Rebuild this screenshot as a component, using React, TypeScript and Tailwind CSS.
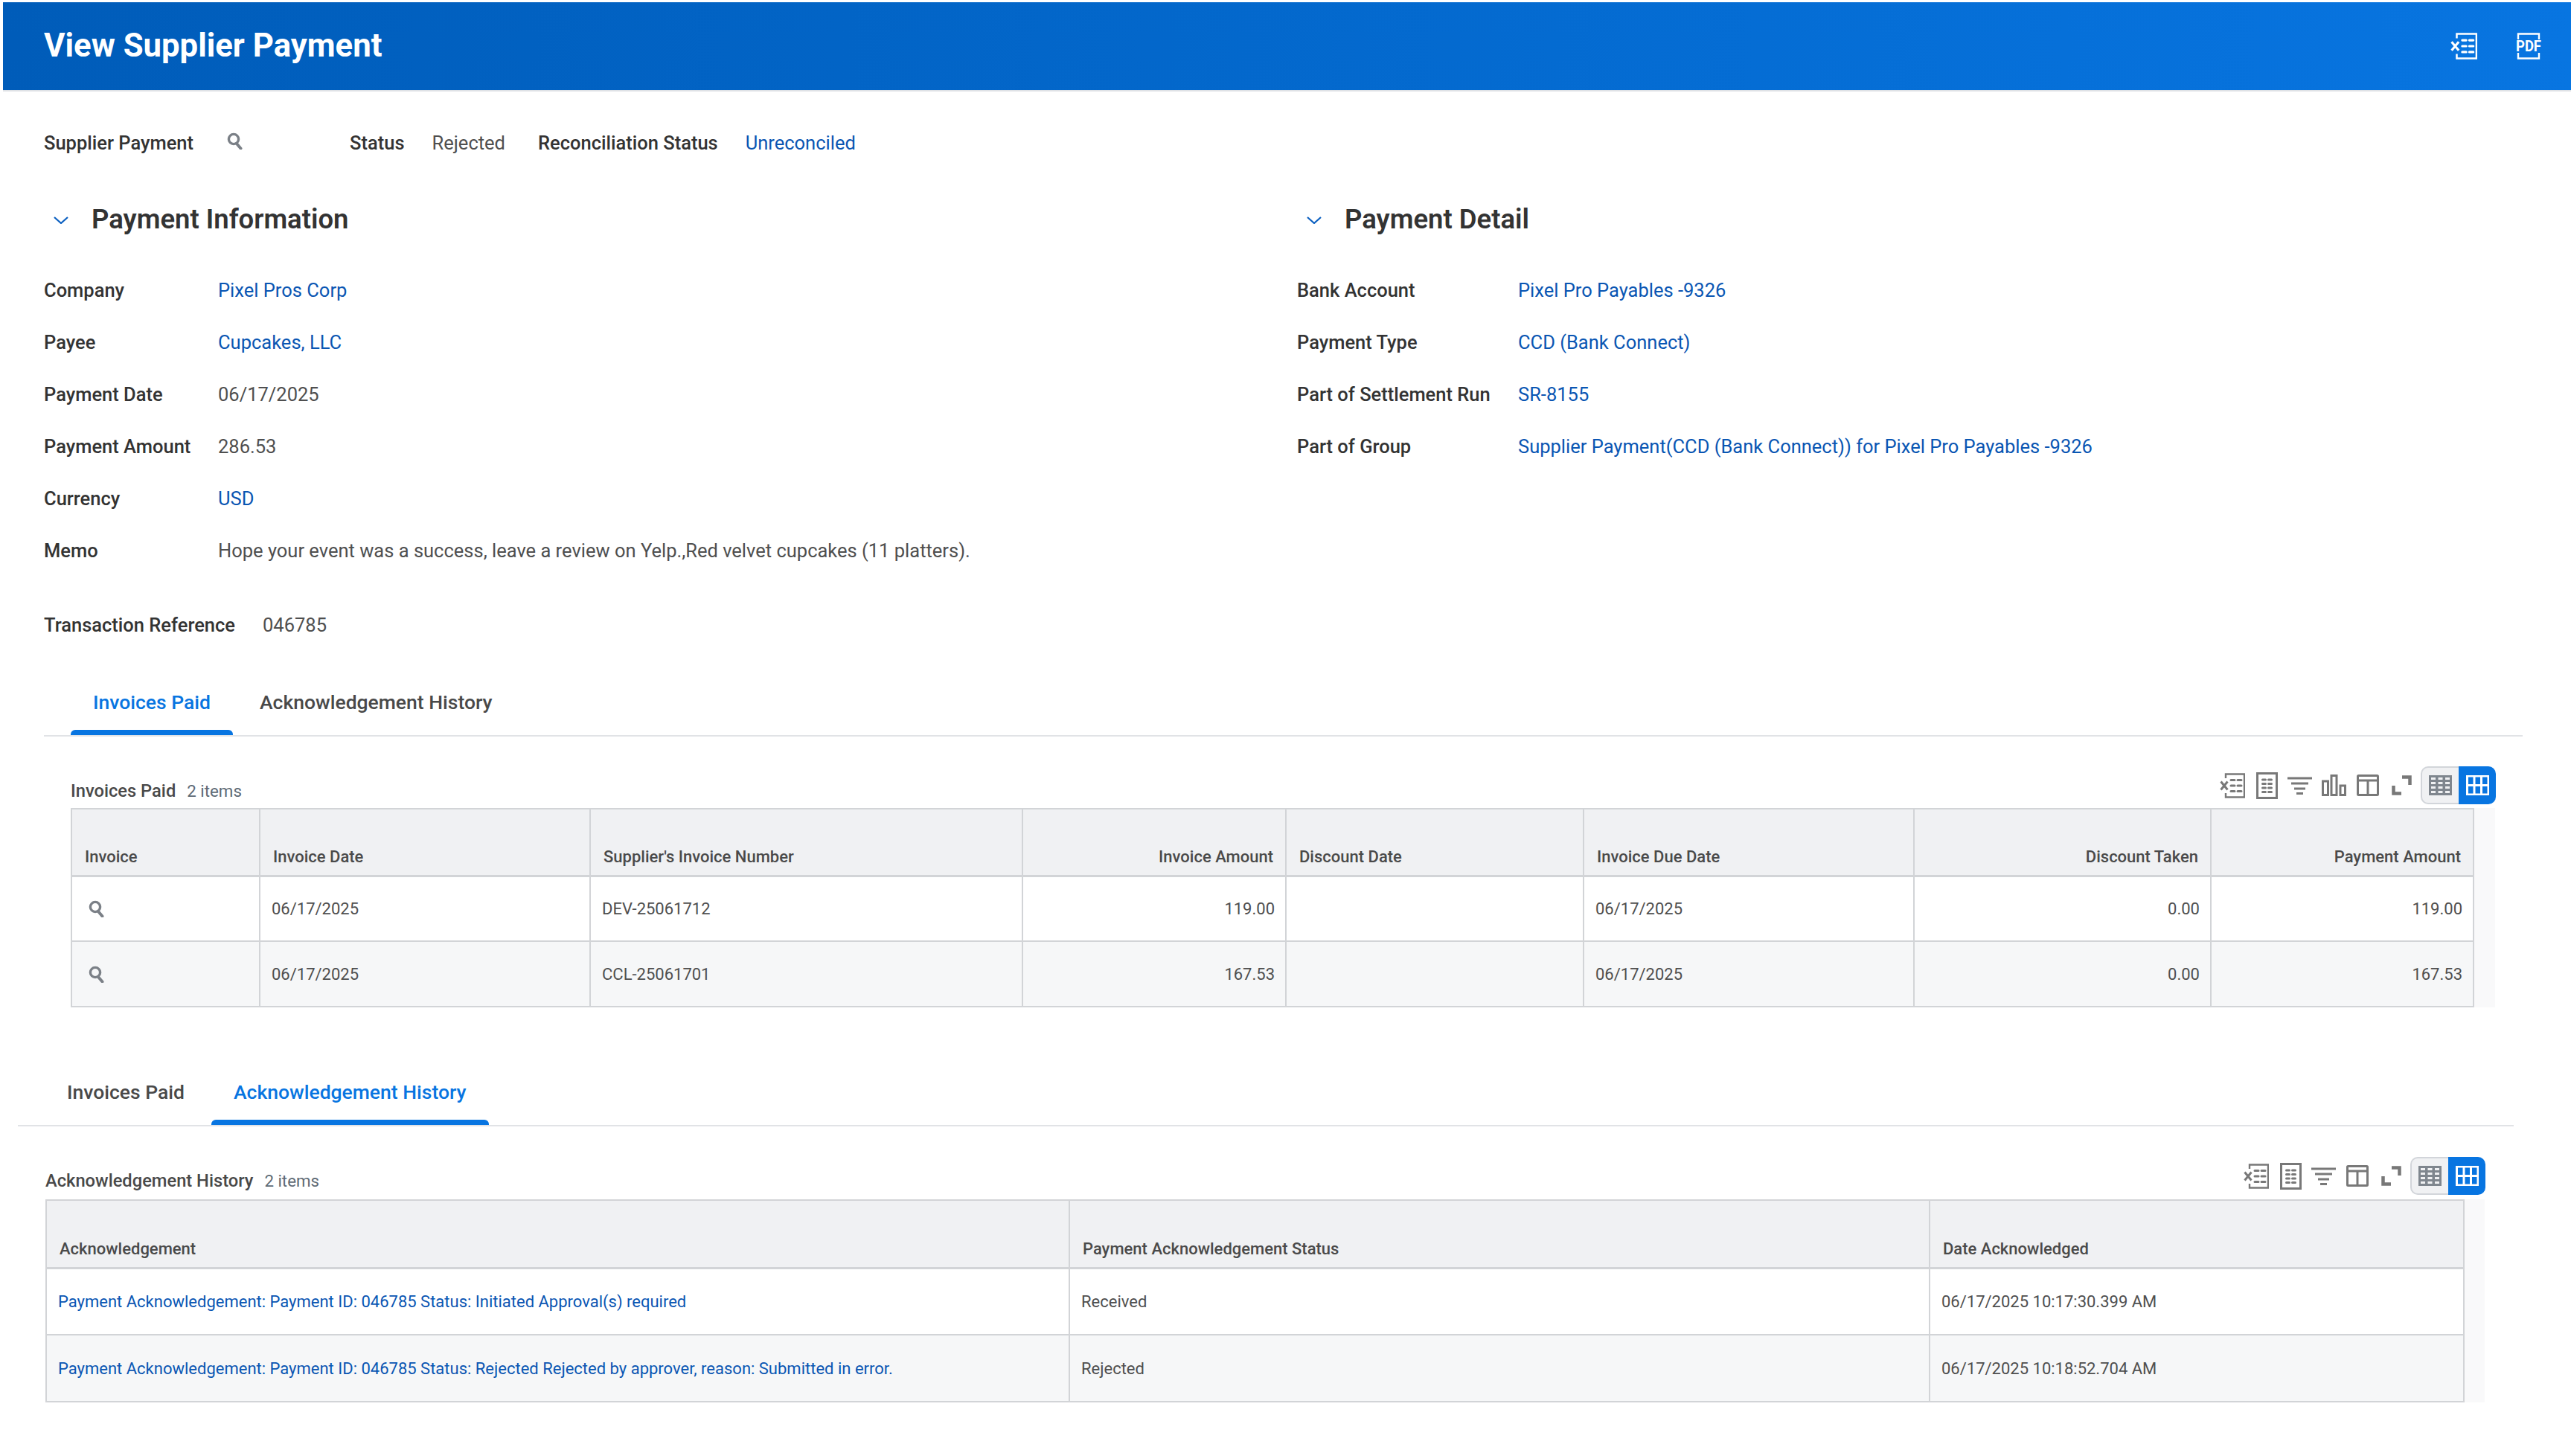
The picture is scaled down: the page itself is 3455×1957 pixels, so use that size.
import { ReactNode } from "react";

const Search = ({ className }: { className: string }) => (
	<svg viewBox="0 0 22 23" className={className} fill="none" stroke="#7b8087">
		<circle cx="9" cy="9" r="6.6" strokeWidth="3.4" />
		<path d="M13 15l5.5 6.5" strokeWidth="4" strokeLinecap="round" />
	</svg>
);

const Chevron = () => (
	<svg viewBox="0 0 20 10" className="h-[10px] w-[20px]" fill="none" stroke="#0a5fc0" strokeWidth="2.2">
		<path d="M1 1l9 8 9-8" />
	</svg>
);

const ExcelIcon = ({ color, className }: { color: string; className: string }) => (
	<svg viewBox="0 0 34 34" className={className} fill="none" stroke={color}>
		<path d="M8 7V1.500h25v31H8V27" strokeWidth="2.4" />
		<path d="M1.500 11.500l9 11M10.500 11.500l-9 11" strokeWidth="3" />
		<path d="M15 9.500h5M24 9.500h5M15 17h5M24 17h5M15 24.500h5M24 24.500h5" strokeWidth="3" strokeLinecap="round" />
	</svg>
);

const ListIcon = () => (
	<svg viewBox="0 0 29 36" className="h-[36px] w-[29px]" fill="none" stroke="#787878">
		<rect x="1.500" y="1.500" width="26" height="33" strokeWidth="3" />
		<path d="M8.500 10h4M16.500 10h4M8.500 15.500h4M16.500 15.500h4M8.500 21h4M16.500 21h4M8.500 26.500h4M16.500 26.500h4" strokeWidth="3" strokeLinecap="round" />
	</svg>
);

const FilterIcon = () => (
	<svg viewBox="0 0 33 24" className="h-[24px] w-[33px]" fill="none" stroke="#787878" strokeWidth="3">
		<path d="M0 2h33M5 9h23M9 16h15M12 22.500h9" />
	</svg>
);

const ChartIcon = () => (
	<svg viewBox="0 0 33 29" className="h-[29px] w-[33px]" fill="none" stroke="#787878" strokeWidth="3">
		<path d="M1.500 9h7v18.500h-7zM13 1.500h7v26h-7zM25 15h6.500v12.500H25z" />
	</svg>
);

const ColumnsIcon = () => (
	<svg viewBox="0 0 30 29" className="h-[29px] w-[30px]" fill="none" stroke="#787878" strokeWidth="3">
		<rect x="1.500" y="1.500" width="27" height="26" rx="1" />
		<path d="M1.500 8h27M15 8v19.500" />
	</svg>
);

const ExpandIcon = () => (
	<svg viewBox="0 0 27 27" className="h-[27px] w-[27px]" fill="none" stroke="#787878" strokeWidth="4.500">
		<path d="M14 2.500h10.500V13M2.500 14v10.500H13" />
	</svg>
);

const ViewToggle = () => (
	<div className="flex h-[51px] w-[101px]">
		<div className="flex w-[51px] items-center justify-center rounded-l-[10px] border-2 border-r-0 border-[#d2d5da] bg-[#f0f1f3]">
			<svg viewBox="0 0 31 27" className="h-[27px] w-[31px]">
				<rect width="31" height="27" fill="#7f868e" />
				<path
					d="M3 3h6v3H3zM12.500 3h6v3h-6zM22 3h6v3h-6zM3 9h6v3H3zM12.500 9h6v3h-6zM22 9h6v3h-6zM3 15h6v3H3zM12.500 15h6v3h-6zM22 15h6v3h-6zM3 21h6v3H3zM12.500 21h6v3h-6zM22 21h6v3h-6z"
					fill="#f0f1f3"
				/>
			</svg>
		</div>
		<div className="flex w-[50px] items-center justify-center rounded-r-[10px] bg-[#0875e1]">
			<svg viewBox="0 0 31 27" className="h-[27px] w-[31px]">
				<rect width="31" height="27" fill="#fff" />
				<path d="M3 2.500h6.500v9.500H3zM12.500 2.500h6.500v9.500h-6.500zM22 2.500h6.500v9.500H22zM3 15h6.500v9.500H3zM12.500 15h6.500v9.500h-6.500zM22 15h6.500v9.500H22z" fill="#0875e1" />
			</svg>
		</div>
	</div>
);

const Field = ({ label, labelClass, link, children }: { label: string; labelClass: string; link?: boolean; children: ReactNode }) => (
	<div className="flex h-[70px] items-center pt-[1px] text-[25.500px]">
		<span className={`${labelClass} font-medium text-[#333333]`}>{label}</span>
		<span className={link ? "text-[#0a56b3]" : "text-[#4f4f4f]"}>{children}</span>
	</div>
);

const SectionHeading = ({ title }: { title: string }) => (
	<div className="flex h-[60px] items-center">
		<span className="ml-[13px] mr-[31px] mt-[2px] flex">
			<Chevron />
		</span>
		<h2 className="pt-[1px] text-[36.500px] font-semibold text-[#333333]">{title}</h2>
	</div>
);

const Tabs = ({ active }: { active: number }) => (
	<div className="flex h-[90px] gap-[6px] border-b-2 border-[#e1e3e6] pl-[36px]">
		{["Invoices Paid", "Acknowledgement History"].map((tab, i) => (
			<div
				key={tab}
				className={`relative flex h-[88px] items-center px-[30px] text-[26.500px] font-medium ${
					i === active ? "text-[#0875e1]" : "text-[#494949]"
				}`}
			>
				{tab}
				{i === active && <span className="absolute bottom-0 left-0 right-0 h-[7px] rounded-t-[6px] bg-[#0875e1]"></span>}
			</div>
		))}
	</div>
);

const thClass = "border-2 border-b-[3px] border-[#d2d4d7] bg-[#f0f1f3] pl-[17px] pr-[16px] pb-[11px] align-bottom text-[22px] font-medium leading-[26px] text-[#4a4a4a]";
const tdClass = "border-2 border-[#d2d4d7] pl-[15px] pr-[14px] text-[22px] text-[#4f4f4f]";

const invoiceRows = [
	["06/17/2025", "DEV-25061712", "119.00", "", "06/17/2025", "0.00", "119.00"],
	["06/17/2025", "CCL-25061701", "167.53", "", "06/17/2025", "0.00", "167.53"],
];

const InvoicesTable = () => (
	<table className="w-[3230px] table-fixed border-collapse">
		<thead>
			<tr className="h-[90px]">
				<th className={`${thClass} w-[253px] text-left`}>Invoice</th>
				<th className={`${thClass} w-[444px] text-left`}>Invoice Date</th>
				<th className={`${thClass} w-[581px] text-left`}>Supplier's Invoice Number</th>
				<th className={`${thClass} w-[354px] text-right`}>Invoice Amount</th>
				<th className={`${thClass} w-[400px] text-left`}>Discount Date</th>
				<th className={`${thClass} w-[444px] text-left`}>Invoice Due Date</th>
				<th className={`${thClass} w-[399px] text-right`}>Discount Taken</th>
				<th className={`${thClass} text-right`}>Payment Amount</th>
			</tr>
		</thead>
		<tbody>
			{invoiceRows.map((row, i) => (
				<tr key={row[1]} className={`h-[88px] ${i % 2 ? "bg-[#f6f7f8]" : "bg-white"}`}>
					<td className={tdClass}>
						<Search className="ml-[7px] h-[23px] w-[22px]" />
					</td>
					<td className={tdClass}>{row[0]}</td>
					<td className={tdClass}>{row[1]}</td>
					<td className={`${tdClass} text-right`}>{row[2]}</td>
					<td className={tdClass}>{row[3]}</td>
					<td className={tdClass}>{row[4]}</td>
					<td className={`${tdClass} text-right`}>{row[5]}</td>
					<td className={`${tdClass} text-right`}>{row[6]}</td>
				</tr>
			))}
		</tbody>
	</table>
);

const ackRows = [
	["Payment Acknowledgement: Payment ID: 046785 Status: Initiated Approval(s) required", "Received", "06/17/2025 10:17:30.399 AM"],
	["Payment Acknowledgement: Payment ID: 046785 Status: Rejected Rejected by approver, reason: Submitted in error.", "Rejected", "06/17/2025 10:18:52.704 AM"],
];

const AckTable = () => (
	<table className="w-[3251px] table-fixed border-collapse">
		<thead>
			<tr className="h-[91px]">
				<th className={`${thClass} w-[1375px] text-left`}>Acknowledgement</th>
				<th className={`${thClass} w-[1156px] text-left`}>Payment Acknowledgement Status</th>
				<th className={`${thClass} text-left`}>Date Acknowledged</th>
			</tr>
		</thead>
		<tbody>
			{ackRows.map((row, i) => (
				<tr key={row[2]} className={`h-[90px] ${i % 2 ? "bg-[#f6f7f8]" : "bg-white"}`}>
					<td className={`${tdClass} !text-[#0a56b3]`}>{row[0]}</td>
					<td className={tdClass}>{row[1]}</td>
					<td className={tdClass}>{row[2]}</td>
				</tr>
			))}
		</tbody>
	</table>
);

const App = () => {
	return (
		<div className="min-h-[1957px] w-full bg-white font-['Roboto',sans-serif]">
			<header className="ml-[4px] mt-[3px] flex h-[118px] items-center justify-between bg-gradient-to-r from-[#005cb9] to-[#0875e1] pl-[55px] pr-[40px] shadow-[0_2px_0_#dfe2e6]">
				<h1 className="text-[43.700px] font-bold text-white">View Supplier Payment</h1>
				<div className="flex items-center gap-[52px]">
					<ExcelIcon color="#ffffff" className="h-[36px] w-[36px]" />
					<svg viewBox="0 0 34 36" className="h-[36px] w-[34px] overflow-visible" fill="none" stroke="#ffffff" strokeWidth="2.400">
						<path d="M3 9V1.500h28V9M3 27v7.500h28V27" />
						<text x="0" y="25" fontSize="20" fontWeight="700" textLength="34" lengthAdjust="spacingAndGlyphs" fill="#ffffff" stroke="none" fontFamily="Roboto">
							PDF
						</text>
					</svg>
				</div>
			</header>

			<div className="mt-[41px] flex h-[60px] items-center pl-[59px] text-[25.500px]">
				<span className="font-medium text-[#333333]">Supplier Payment</span>
				<Search className="ml-[45px] mb-[6px] h-[23px] w-[22px]" />
				<span className="ml-[143px] font-medium text-[#333333]">Status</span>
				<span className="ml-[37px] text-[#4f4f4f]">Rejected</span>
				<span className="ml-[44px] font-medium text-[#333333]">Reconciliation Status</span>
				<span className="ml-[37px] text-[#0a56b3]">Unreconciled</span>
			</div>

			<div className="mt-[43px] grid grid-cols-[1684px_1fr] pl-[59px]">
				<div>
					<SectionHeading title="Payment Information" />
					<div className="mt-[30px]">
						<Field label="Company" labelClass="w-[234px]" link>
							Pixel Pros Corp
						</Field>
						<Field label="Payee" labelClass="w-[234px]" link>
							Cupcakes, LLC
						</Field>
						<Field label="Payment Date" labelClass="w-[234px]">
							06/17/2025
						</Field>
						<Field label="Payment Amount" labelClass="w-[234px]">
							286.53
						</Field>
						<Field label="Currency" labelClass="w-[234px]" link>
							USD
						</Field>
						<Field label="Memo" labelClass="w-[234px]">
							Hope your event was a success, leave a review on Yelp.,Red velvet cupcakes (11 platters).
						</Field>
					</div>
					<div className="mt-[30px]">
						<Field label="Transaction Reference" labelClass="w-[294px]">
							046785
						</Field>
					</div>
				</div>
				<div>
					<SectionHeading title="Payment Detail" />
					<div className="mt-[30px]">
						<Field label="Bank Account" labelClass="w-[297px]" link>
							Pixel Pro Payables -9326
						</Field>
						<Field label="Payment Type" labelClass="w-[297px]" link>
							CCD (Bank Connect)
						</Field>
						<Field label="Part of Settlement Run" labelClass="w-[297px]" link>
							SR-8155
						</Field>
						<Field label="Part of Group" labelClass="w-[297px]" link>
							Supplier Payment(CCD (Bank Connect)) for Pixel Pro Payables -9326
						</Field>
					</div>
				</div>
			</div>

			<section className="ml-[59px] mt-[25px] w-[3331px]">
				<Tabs active={0} />
				<div className="ml-[36px] flex h-[96px] w-[3259px] items-end justify-between pb-[5px]">
					<div className="-mb-[1px] flex items-baseline">
						<span className="text-[23.700px] font-medium text-[#494949]">Invoices Paid</span>
						<span className="ml-[15px] text-[22.300px] text-[#5e6a75]">2 items</span>
					</div>
					<div className="flex items-center">
						<ExcelIcon color="#787878" className="h-[34px] w-[34px]" />
						<span className="ml-[15px] flex"><ListIcon /></span>
						<span className="ml-[13px] flex"><FilterIcon /></span>
						<span className="ml-[13px] flex"><ChartIcon /></span>
						<span className="ml-[14px] flex"><ColumnsIcon /></span>
						<span className="ml-[17px] flex"><ExpandIcon /></span>
						<span className="ml-[12px] flex"><ViewToggle /></span>
					</div>
				</div>
				<div className="ml-[36px] flex w-[3258px]">
					<InvoicesTable />
					<div className="flex-1 bg-[#f9f9fa]"></div>
				</div>
			</section>

			<section className="ml-[24px] mt-[70px] w-[3354px]">
				<Tabs active={1} />
				<div className="ml-[37px] flex h-[98px] w-[3279px] items-end justify-between pb-[6px]">
					<div className="flex items-baseline">
						<span className="text-[23.700px] font-medium text-[#494949]">Acknowledgement History</span>
						<span className="ml-[15px] text-[22.300px] text-[#5e6a75]">2 items</span>
					</div>
					<div className="flex items-center">
						<ExcelIcon color="#787878" className="h-[34px] w-[34px]" />
						<span className="ml-[15px] flex"><ListIcon /></span>
						<span className="ml-[13px] flex"><FilterIcon /></span>
						<span className="ml-[14px] flex"><ColumnsIcon /></span>
						<span className="ml-[17px] flex"><ExpandIcon /></span>
						<span className="ml-[12px] flex"><ViewToggle /></span>
					</div>
				</div>
				<div className="ml-[37px] flex w-[3278px]">
					<AckTable />
					<div className="flex-1 bg-[#f9f9fa]"></div>
				</div>
			</section>
		</div>
	);
};

export default App;
